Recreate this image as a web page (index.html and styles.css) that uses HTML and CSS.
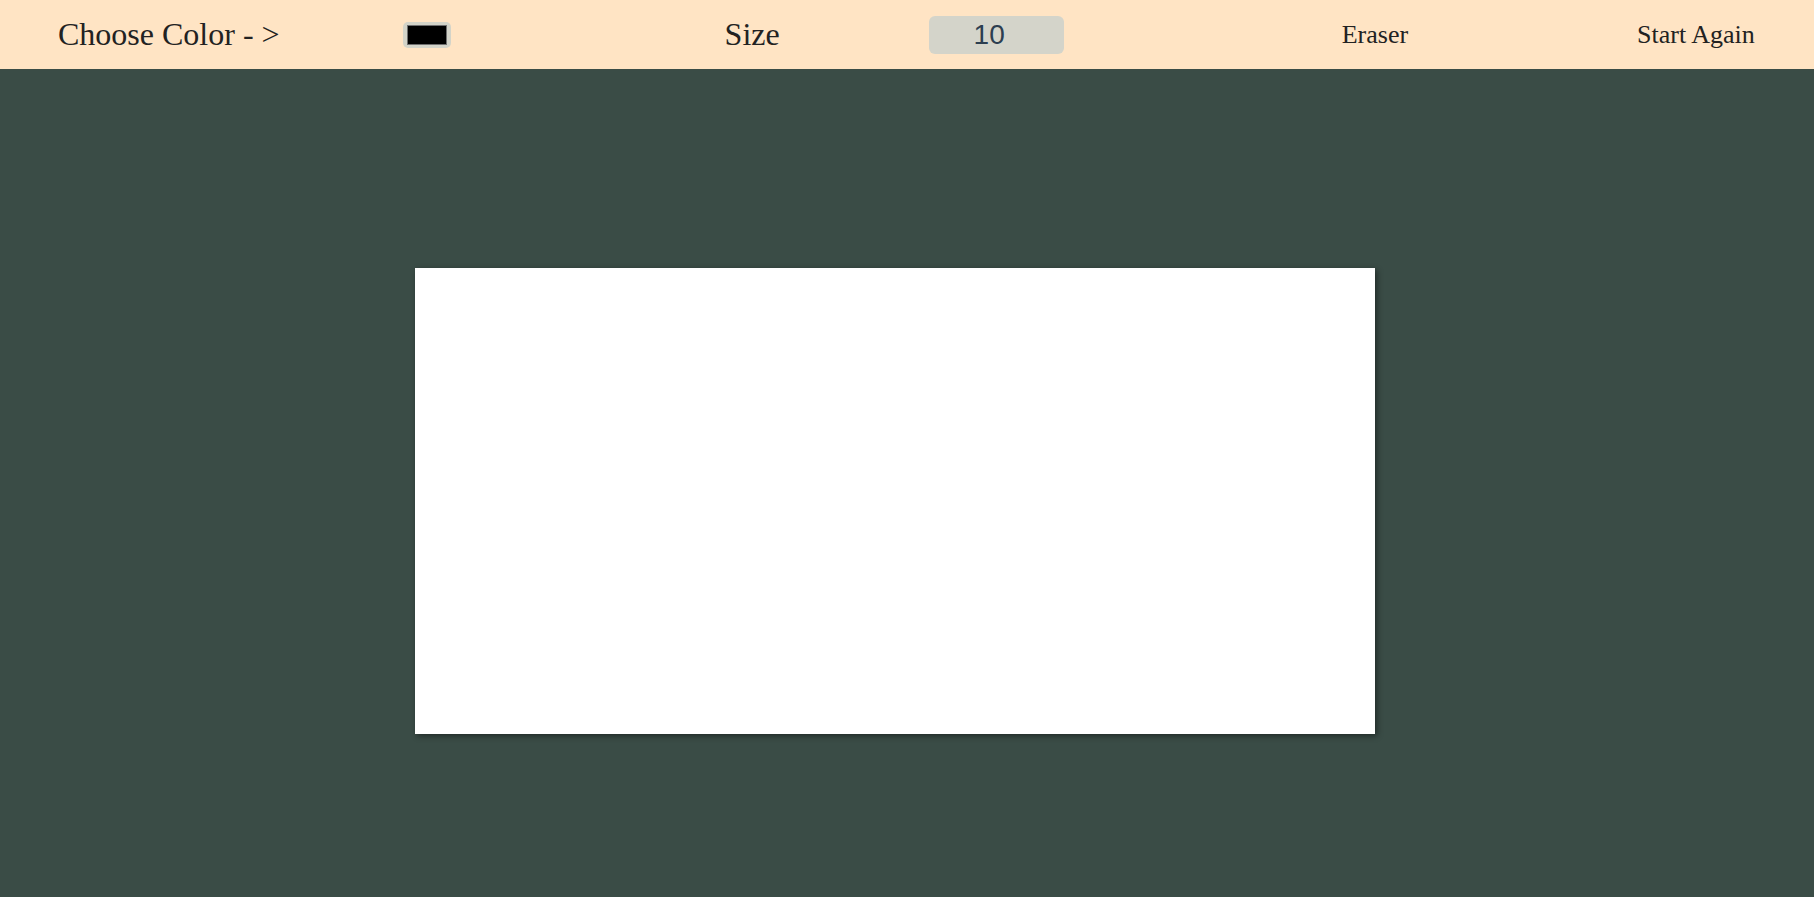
FILE: index.html
```html
<!DOCTYPE html>
<html lang="en">
<head>
<meta charset="utf-8">
<title>Paint</title>
<link rel="stylesheet" href="styles.css">
</head>
<body>
<nav class="toolbar">
  <span class="label label-color">Choose Color - &gt;</span>
  <input class="color-pick" type="color" value="#000000">
  <span class="label label-size">Size</span>
  <input class="size-input" type="number" value="10">
  <button class="tool tool-eraser">Eraser</button>
  <button class="tool tool-clear">Start Again</button>
</nav>
<main class="stage">
  <div class="canvas"></div>
</main>
</body>
</html>
```

FILE: styles.css
```css
html, body {
  margin: 0;
  padding: 0;
  height: 100%;
}
body {
  background: #3a4c46;
  font-family: "Liberation Serif", "Times New Roman", serif;
  color: #222;
  overflow: hidden;
}
.toolbar {
  height: 69px;
  background: #ffe4c4;
  display: flex;
  align-items: center;
  padding-left: 58px;
  box-sizing: border-box;
}
.label {
  font-size: 32px;
  color: #222;
  white-space: nowrap;
}
.color-pick {
  margin-left: 123px;
  width: 48px;
  height: 26px;
  padding: 3px 4px;
  border: none;
  border-radius: 5px;
  background: #d3d3c8;
  box-sizing: border-box;
  cursor: pointer;
}
.color-pick::-webkit-color-swatch-wrapper {
  padding: 0;
}
.color-pick::-webkit-color-swatch {
  border: 1px solid #6f6f6f;
  border-radius: 0;
}
.label-size {
  margin-left: 274px;
}
.size-input {
  margin-left: 149px;
  width: 135px;
  height: 38px;
  border: none;
  border-radius: 6px;
  background: #d4d4ca;
  color: #2c3e50;
  font-family: "Liberation Sans", Arial, sans-serif;
  font-size: 28px;
  text-align: center;
  padding: 0 14px 0 0;
  box-sizing: border-box;
  outline: none;
  -moz-appearance: textfield;
}
.size-input::-webkit-inner-spin-button,
.size-input::-webkit-outer-spin-button {
  -webkit-appearance: none;
  margin: 0;
}
.tool {
  background: transparent;
  border: none;
  padding: 0;
  font-family: "Liberation Serif", "Times New Roman", serif;
  font-size: 26px;
  color: #222;
  cursor: pointer;
  white-space: nowrap;
}
.tool-eraser {
  margin-left: 278px;
}
.tool-clear {
  margin-left: 229px;
}
.stage {
  padding-top: 199px;
  padding-left: 415px;
}
.canvas {
  width: 960px;
  height: 466px;
  background: #fff;
  box-shadow: 2px 2px 6px rgba(0, 0, 0, 0.45);
}
```
